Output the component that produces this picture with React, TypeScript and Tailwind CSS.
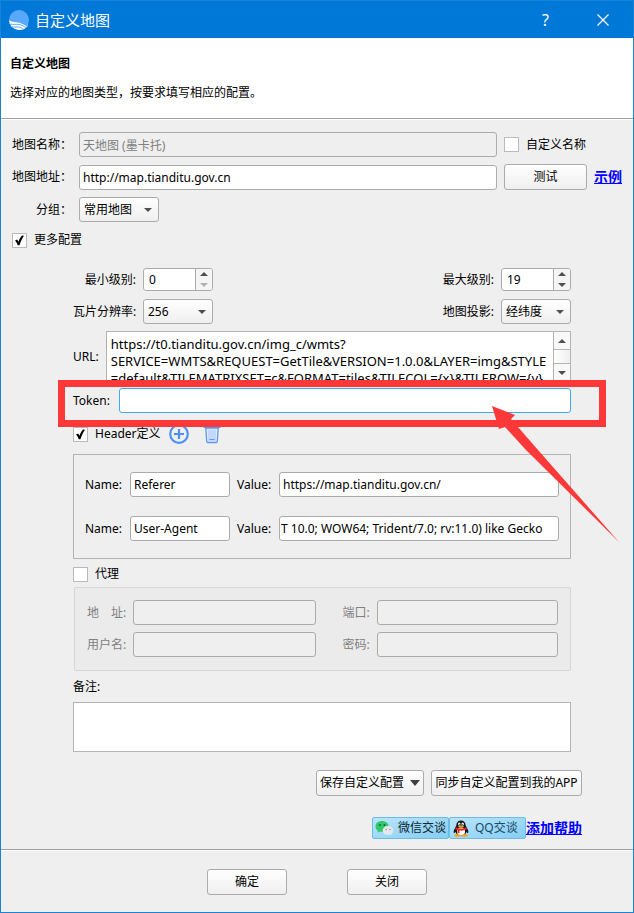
import { useId } from "react";
import type { ComponentProps, ReactNode } from "react";
import clsx from "clsx";

const fieldClass =
  "h-[25px] w-full min-w-0 rounded-[3px] border border-[#ababab] bg-white px-[3px] outline-none disabled:bg-[#efefef] disabled:text-[#808080]";

const buttonClass =
  "h-[26px] rounded-[3px] border border-[#ababab] bg-linear-to-b from-white to-[#efefef] whitespace-nowrap";

const Arrow = ({ up, muted }: { up?: boolean; muted?: boolean }) => (
  <svg
    viewBox="0 0 8 4"
    className={clsx("h-1 w-2", muted ? "fill-[#b0b0b0]" : "fill-[#505050]")}
    aria-hidden="true"
  >
    <path d={up ? "M0 4 4 0l4 4z" : "M0 0h8L4 4z"} />
  </svg>
);

const Field = ({ className, ...props }: ComponentProps<"input">) => (
  <input type="text" className={clsx(fieldClass, className)} {...props} />
);

type CheckboxProps = {
  label: string;
  defaultChecked?: boolean;
  className?: string;
};

const Checkbox = ({ label, defaultChecked, className }: CheckboxProps) => (
  <label className={clsx("flex items-center gap-[7px]", className)}>
    <span className="relative block size-[15px]">
      <input
        type="checkbox"
        defaultChecked={defaultChecked}
        className="peer block size-[15px] appearance-none border border-[#bababa] bg-white"
      />
      <svg
        viewBox="0 0 15 15"
        className="pointer-events-none absolute inset-0 hidden size-[15px] peer-checked:block"
        aria-hidden="true"
      >
        <path
          d="M3 7.6 5.2 6.6l1.2 2.2C7.4 6.2 8.6 4 10 2.6L12 2.8C10.2 5.4 8.7 8.6 7.5 12.2H5.7C5 10.2 4.2 8.7 3 7.6z"
          fill="#000"
        />
      </svg>
    </span>
    {label}
  </label>
);

type SelectProps = {
  options: string[];
  id: string;
  className: string;
};

const Select = ({ options, id, className }: SelectProps) => (
  <span className={clsx("relative block", className)}>
    <select
      id={id}
      className="block h-[25px] w-full appearance-none rounded-[3px] border border-[#ababab] bg-linear-to-b from-white to-[#efefef] pl-1 outline-none"
    >
      {options.map((option) => (
        <option key={option}>{option}</option>
      ))}
    </select>
    <span className="pointer-events-none absolute inset-y-0 right-[7px] flex items-center">
      <Arrow />
    </span>
  </span>
);

type SpinBoxProps = {
  id: string;
  value: number;
  min: number;
};

const SpinBox = ({ id, value, min }: SpinBoxProps) => (
  <span className="flex h-[23px] w-[70px] overflow-hidden rounded-[3px] border border-[#ababab] bg-white">
    <input
      id={id}
      type="number"
      defaultValue={value}
      min={min}
      className="min-w-0 flex-1 pl-[5px] outline-none [&::-webkit-inner-spin-button]:appearance-none"
    />
    <span className="flex w-[17px] flex-col border-l border-[#ababab] bg-[#f5f5f5]">
      <button
        type="button"
        aria-label="增加"
        className="flex flex-1 items-center justify-center"
      >
        <Arrow up />
      </button>
      <button
        type="button"
        aria-label="减少"
        className="flex flex-1 items-center justify-center"
      >
        <Arrow muted={value === min} />
      </button>
    </span>
  </span>
);

type LabeledProps = {
  label: string;
  children: (id: string) => ReactNode;
  className?: string;
  labelClassName?: string;
};

const Labeled = ({
  label,
  children,
  className,
  labelClassName,
}: LabeledProps) => {
  const id = useId();

  return (
    <div className={clsx("flex items-center gap-[7px]", className)}>
      <label
        htmlFor={id}
        className={clsx("shrink-0 whitespace-pre", labelClassName)}
      >
        {label}
      </label>
      {children(id)}
    </div>
  );
};

const TitleBar = () => (
  <header className="flex h-[37px] items-center bg-[#0078d7] pl-2 text-white">
    <svg viewBox="0 0 20 20" className="size-5" aria-hidden="true">
      <circle cx="10" cy="10" r="10" fill="#58a9fc" />
      <path
        d="M0 10.500c3 1.300 5 1.500 7.500 1.700 5 .300 9 1.300 11.800 2.800A10 10 0 0 1 10 20 10 10 0 0 1 0 10.500z"
        fill="#fff"
      />
      <path
        d="M7.500 12.200c5-.200 9 .300 11.800 2.800l-1.200 2c-2.500-2.500-6-4-10.600-4.800z"
        fill="#58a9fc"
      />
      <g fill="none" stroke="#58a9fc" strokeWidth="1">
        <path d="M1 14.200c4 .500 6-.300 9 .300 3 .600 5.400 1.800 7 3.300" />
        <path d="M3 17c3 .300 5-.500 7.500.200 1.800.5 3 1.200 3.800 2" />
      </g>
    </svg>
    <h1 className="ml-1.5 flex-1 text-[15px]">自定义地图</h1>
    <button type="button" aria-label="帮助" className="w-[57px] text-base">
      ?
    </button>
    <button
      type="button"
      aria-label="关闭窗口"
      className="flex w-[57px] justify-center"
    >
      <svg viewBox="0 0 12 12" className="size-3" aria-hidden="true">
        <path d="M.5.5l11 11M11.5.5l-11 11" stroke="#fff" strokeWidth="1.2" />
      </svg>
    </button>
    <span className="w-[2px]" />
  </header>
);

const UrlField = () => (
  <Labeled label="URL:" className="mt-[7px]">
    {(id) => (
      <div className="flex h-[51px] min-w-0 flex-1 border border-[#b4b4b4] bg-white">
        <textarea
          id={id}
          className="block min-w-0 flex-1 resize-none overflow-hidden pt-1 pl-1 text-[13px] leading-[17px] whitespace-pre outline-none"
          defaultValue={
            "https://t0.tianditu.gov.cn/img_c/wmts?\nSERVICE=WMTS&REQUEST=GetTile&VERSION=1.0.0&LAYER=img&STYLE\n=default&TILEMATRIXSET=c&FORMAT=tiles&TILECOL={x}&TILEROW={y}"
          }
        />
        <div className="flex w-[17px] flex-col border-l border-[#b4b4b4] bg-[#f8f8f8]">
          <button
            type="button"
            aria-label="向上滚动"
            className="flex h-[17px] items-center justify-center"
          >
            <Arrow up />
          </button>
          <span className="flex-1 border-y border-[#b4b4b4] bg-linear-to-r from-white to-[#efefef]" />
          <button
            type="button"
            aria-label="向下滚动"
            className="flex h-[17px] items-center justify-center"
          >
            <Arrow />
          </button>
        </div>
      </div>
    )}
  </Labeled>
);

const TokenField = () => (
  <div className="relative mt-1.5">
    <Labeled label="Token:" labelClassName="w-[39px]">
      {(id) => <Field id={id} className="border-[#3fa9f5]!" />}
    </Labeled>
    <div className="pointer-events-none absolute -top-2 -right-[35px] -left-[15px] z-10 h-[47px] border-7 border-[#fc3838]" />
    <svg
      viewBox="0 0 128 138"
      className="pointer-events-none absolute top-[17px] -right-[49px] z-20 h-[138px] w-32"
      aria-hidden="true"
    >
      <path
        d="M0 1 23 10 19 14 46 45 127 137 34 45 13 22 7 24z"
        fill="#fc3838"
      />
    </svg>
  </div>
);

const HeaderToolbar = () => (
  <div className="mt-[11px] flex h-5 items-center">
    <Checkbox label="Header定义" defaultChecked />
    <button type="button" aria-label="添加 Header" className="ml-2">
      <svg
        viewBox="0 0 20 20"
        className="size-5"
        fill="none"
        stroke="#4d91f7"
        strokeWidth="2.2"
        aria-hidden="true"
      >
        <circle cx="10" cy="10" r="8.8" />
        <path d="M10 5v10M5 10h10" />
      </svg>
    </button>
    <button type="button" aria-label="删除 Header" className="ml-[13px]">
      <svg viewBox="0 0 20 20" className="size-5" aria-hidden="true">
        <path
          d="M3.800 4h12.400l-.9 13.500q-.1 1-1.100 1H5.800q-1 0-1.100-1z"
          fill="#e4edfb"
          stroke="#5b96f0"
          strokeWidth="1.3"
        />
        <path d="M6 5.500h8V17H6z" fill="#c3d7f6" />
        <path d="M1.500 3.500h17M7 3.500v-2h6v2" fill="none" stroke="#5b96f0" />
        <path d="M7.500 15.500h5" stroke="#5b96f0" />
      </svg>
    </button>
  </div>
);

const headers = [
  { name: "Referer", value: "https://map.tianditu.gov.cn/", padding: "" },
  {
    name: "User-Agent",
    value: "T 10.0; WOW64; Trident/7.0; rv:11.0) like Gecko",
    padding: "pl-[1px] pr-0",
  },
];

const HeaderGroup = () => (
  <div className="mt-2.5 flex flex-col gap-[19px] border border-[#b4b4b4] px-[11px] py-[17px]">
    {headers.map(({ name, value, padding }) => (
      <div key={name} className="flex gap-[7px]">
        <Labeled label="Name:" labelClassName="w-[38px]">
          {(id) => (
            <span className="w-[100px]">
              <Field id={id} defaultValue={name} />
            </span>
          )}
        </Labeled>
        <Labeled
          label="Value:"
          className="min-w-0 flex-1"
          labelClassName="w-[35px]"
        >
          {(id) => <Field id={id} defaultValue={value} className={padding} />}
        </Labeled>
      </div>
    ))}
  </div>
);

const ProxyGroup = () => (
  <fieldset
    disabled
    className="mt-[5px] ml-px grid grid-cols-[228fr_215fr] gap-x-[27px] gap-y-[7px] rounded-[2px] border border-[#d6d6d6] bg-[#ebebeb] px-3 pt-3 pb-[13px] text-[#808080]"
  >
    {["地　址:", "端口:", "用户名:", "密码:"].map((label) => (
      <Labeled
        key={label}
        label={label}
        labelClassName={label.length > 3 ? "w-[39px]" : "w-[27px]"}
      >
        {(id) => <Field id={id} />}
      </Labeled>
    ))}
  </fieldset>
);

const WeChatIcon = () => (
  <svg viewBox="0 0 19 16" className="h-4 w-[19px]" aria-hidden="true">
    <path
      d="M7 1C3 1 .5 3.3.5 6.4c0 1.8.9 3.2 2.300 4.200l-.5 2 2.300-1.200c.8.2 1.600.3 2.400.3 4 0 6.500-2.300 6.500-5.300S11 1 7 1z"
      fill="#31c76a"
    />
    <circle cx="5" cy="5" r="1" fill="#116b3b" />
    <circle cx="9.5" cy="5" r="1" fill="#116b3b" />
    <path
      d="M13 6c-3 0-5.300 1.900-5.300 4.400s2.300 4.400 5.300 4.400c.6 0 1.200-.1 1.800-.2l1.900.9-.4-1.700c1.300-.8 2.100-2 2.100-3.400C18.4 7.900 16 6 13 6z"
      fill="#e4e8ea"
    />
    <circle cx="11.3" cy="9.5" r=".8" fill="#8b9499" />
    <circle cx="15" cy="9.5" r=".8" fill="#8b9499" />
  </svg>
);

const QQIcon = () => (
  <svg viewBox="0 0 16 17" className="h-[17px] w-4" aria-hidden="true">
    <path
      d="M8 .5C5 .5 3.3 2.500 3.300 5.500L1 10c-.6 1.800-.4 3 .1 3 .6 0 1.200-.8 1.400-1.300C3 14 5 15.800 8 15.800s5-1.800 5.500-4.100c.2.5.8 1.300 1.400 1.300.5 0 .7-1.200.1-3l-2.300-4.500C12.700 2.500 11 .5 8 .5z"
      fill="#15191d"
    />
    <ellipse cx="8" cy="11.5" rx="4" ry="3.9" fill="#fff" />
    <ellipse cx="6.3" cy="4" rx="1.2" ry="1.6" fill="#fff" />
    <ellipse cx="9.7" cy="4" rx="1.2" ry="1.6" fill="#fff" />
    <circle cx="6.7" cy="4.2" r=".5" />
    <circle cx="9.3" cy="4.2" r=".5" />
    <ellipse cx="8" cy="6.5" rx="3" ry="1" fill="#f6a415" />
    <path
      d="M2.800 7.300c3 1.600 7.400 1.600 10.400 0l.6 2c-2.400 1.300-5 1.600-7.300 1.300v2.600l-2-.2V10l-2.300-.8z"
      fill="#e52a22"
    />
    <ellipse cx="4.3" cy="15.5" rx="3.2" ry="1.3" fill="#f6a415" />
    <ellipse cx="11.7" cy="15.5" rx="3.2" ry="1.3" fill="#f6a415" />
  </svg>
);

const chatClass =
  "flex h-[22px] w-[77px] items-center rounded-[2px] border border-[#6cbcea] bg-linear-to-br from-[#b9e6fb] to-[#86cdf3] whitespace-nowrap";

const Actions = () => (
  <div className="mt-[18px] flex flex-col items-end gap-[21px] pr-10">
    <div className="flex gap-[7px]">
      <button
        type="button"
        className={clsx(buttonClass, "flex w-[108px] items-center pl-[3px]")}
      >
        保存自定义配置
        <svg
          viewBox="0 0 10 6"
          className="ml-1.5 h-1.5 w-2.5 fill-[#404040]"
          aria-hidden="true"
        >
          <path d="M0 0h10L5 6z" />
        </svg>
      </button>
      <button type="button" className={clsx(buttonClass, "w-[151px]")}>
        同步自定义配置到我的APP
      </button>
    </div>
    <div className="flex items-center">
      <a href="#wechat" className={clsx(chatClass, "gap-1 pl-[2px]")}>
        <WeChatIcon />
        <span className="text-[#0c2530]">微信交谈</span>
      </a>
      <a href="#qq" className={clsx(chatClass, "gap-1.5 pl-[3px]")}>
        <QQIcon />
        <span className="text-[#1b4a66]">QQ交谈</span>
      </a>
      <a href="#help" className="text-sm font-bold text-[#0000ff] underline">
        添加帮助
      </a>
    </div>
  </div>
);

export default function App() {
  const nameId = useId();
  const addressId = useId();
  const groupId = useId();
  const remarkId = useId();

  return (
    <div className="flex min-h-screen flex-col border border-[#1883d7] bg-[#efefef] font-['Noto_Sans','Noto_Sans_CJK_SC',sans-serif] text-xs leading-4 text-black">
      <TitleBar />
      <section className="h-[81px] border-b border-[#a0a0a0] bg-white px-[9px] pt-[18px]">
        <h2 className="font-bold">自定义地图</h2>
        <p className="mt-[13px]">选择对应的地图类型，按要求填写相应的配置。</p>
      </section>
      <main className="border-t border-white px-[11px] pt-3">
        <div className="grid grid-cols-[60px_1fr_118px] items-center gap-[7px]">
          <label htmlFor={nameId} className="text-right">
            地图名称：
          </label>
          <Field id={nameId} defaultValue="天地图 (墨卡托)" disabled />
          <Checkbox label="自定义名称" />
          <label htmlFor={addressId} className="text-right">
            地图地址：
          </label>
          <Field id={addressId} defaultValue="http://map.tianditu.gov.cn" />
          <div className="flex items-center gap-[7px]">
            <button type="button" className={clsx(buttonClass, "w-[83px]")}>
              测试
            </button>
            <a
              href="#example"
              className="text-sm font-bold whitespace-nowrap text-[#0000ff] underline"
            >
              示例
            </a>
          </div>
          <label htmlFor={groupId} className="text-right">
            分组：
          </label>
          <Select id={groupId} options={["常用地图"]} className="w-20" />
        </div>
        <Checkbox label="更多配置" defaultChecked className="mt-2.5" />

        <div className="mt-5 pr-[51px] pl-[61px]">
          <div className="flex justify-between">
            <Labeled label="最小级别:" labelClassName="w-[63px] text-right">
              {(id) => <SpinBox id={id} value={0} min={0} />}
            </Labeled>
            <Labeled label="最大级别:">
              {(id) => <SpinBox id={id} value={19} min={0} />}
            </Labeled>
          </div>
          <div className="mt-2 flex justify-between">
            <Labeled label="瓦片分辨率:" labelClassName="w-[63px]">
              {(id) => (
                <Select id={id} options={["256", "512"]} className="w-[70px]" />
              )}
            </Labeled>
            <Labeled label="地图投影:">
              {(id) => (
                <Select
                  id={id}
                  options={["经纬度", "墨卡托"]}
                  className="w-[70px]"
                />
              )}
            </Labeled>
          </div>
          <UrlField />
          <TokenField />
          <HeaderToolbar />
          <HeaderGroup />
          <Checkbox label="代理" className="mt-[7px]" />
          <ProxyGroup />
          <label htmlFor={remarkId} className="mt-2 block">
            备注:
          </label>
          <textarea
            id={remarkId}
            className="mt-[7px] block h-[50px] w-full resize-none border border-[#b4b4b4] bg-white p-1 outline-none"
          />
        </div>
        <Actions />
      </main>
      <footer className="mt-2.5 flex justify-center gap-[60px] border-t border-[#a0a0a0] pt-[19px] pb-4 shadow-[inset_0_1px_0_white]">
        <button type="button" className={clsx(buttonClass, "w-20")}>
          确定
        </button>
        <button type="button" className={clsx(buttonClass, "w-20")}>
          关闭
        </button>
      </footer>
    </div>
  );
}
